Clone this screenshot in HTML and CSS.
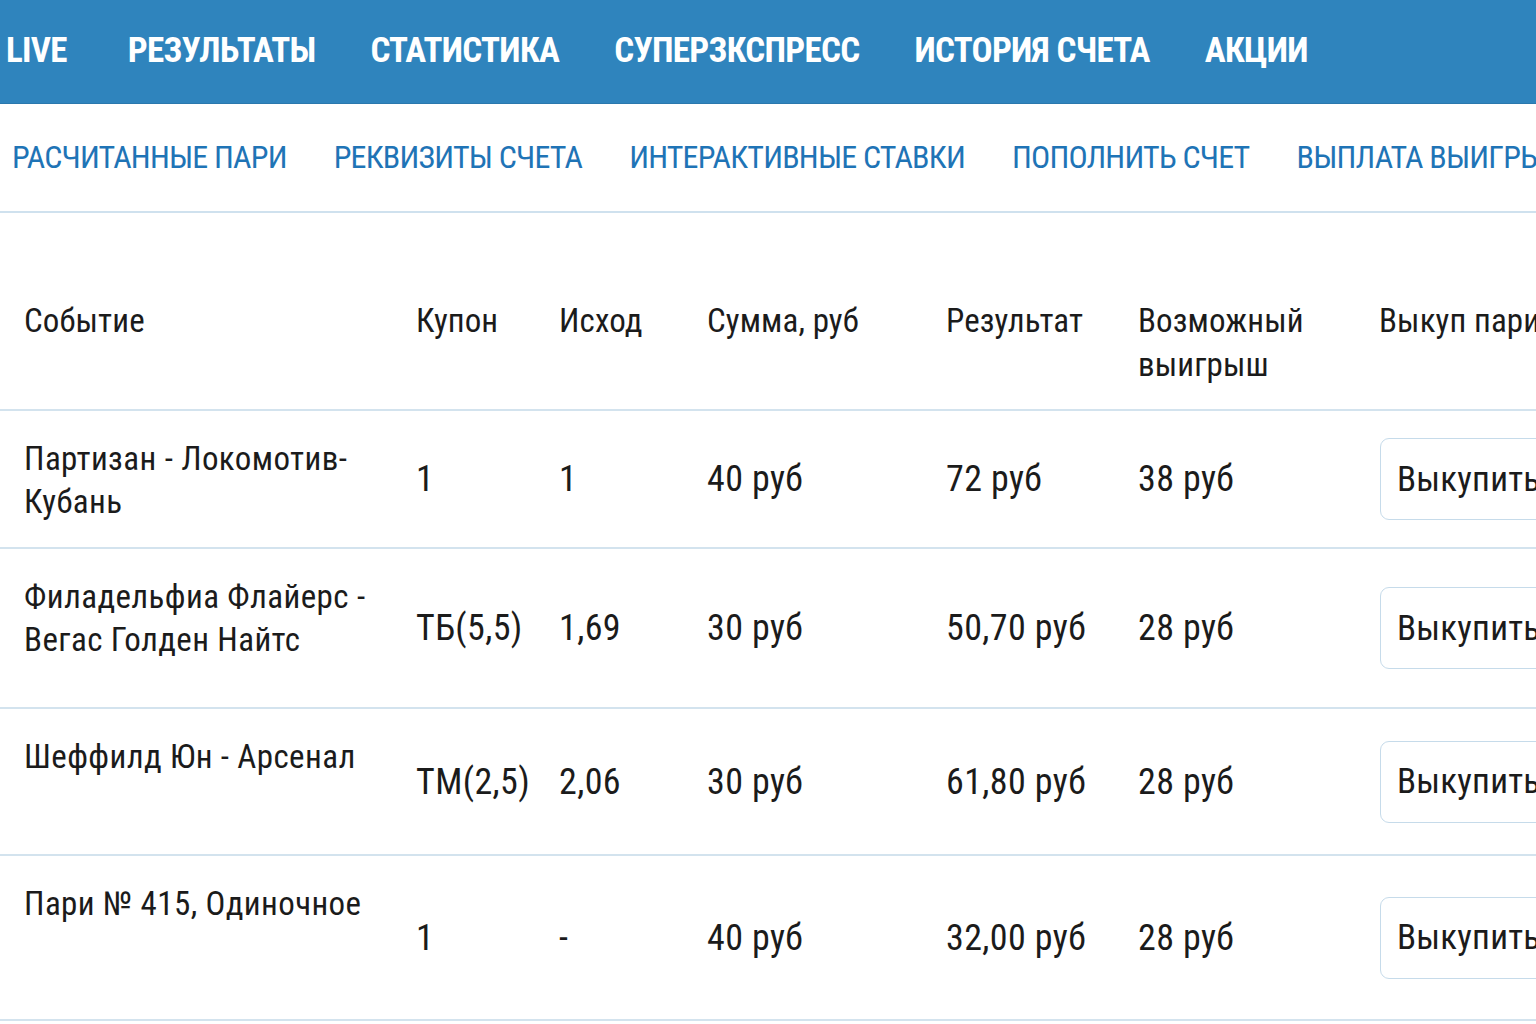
FILE: index.html
```html
<!DOCTYPE html>
<html lang="ru">
<head>
<meta charset="utf-8">
<title>Выкуп пари</title>
<link rel="stylesheet" href="styles.css">
</head>
<body>
<header class="topbar">
  <nav class="topnav">
    <a class="topnav-item live">LIVE</a>
    <a class="topnav-item">РЕЗУЛЬТАТЫ</a>
    <a class="topnav-item">СТАТИСТИКА</a>
    <a class="topnav-item">СУПЕРЗКСПРЕСС</a>
    <a class="topnav-item">ИСТОРИЯ СЧЕТА</a>
    <a class="topnav-item">АКЦИИ</a>
  </nav>
</header>
<nav class="subnav">
  <a class="subnav-item">РАСЧИТАННЫЕ ПАРИ</a>
  <a class="subnav-item">РЕКВИЗИТЫ СЧЕТА</a>
  <a class="subnav-item">ИНТЕРАКТИВНЫЕ СТАВКИ</a>
  <a class="subnav-item">ПОПОЛНИТЬ СЧЕТ</a>
  <a class="subnav-item">ВЫПЛАТА ВЫИГРЫША</a>
</nav>
<main class="content">
  <table class="bets">
    <colgroup>
      <col class="c-event"><col class="c-coupon"><col class="c-outcome"><col class="c-sum"><col class="c-result"><col class="c-win"><col class="c-buy">
    </colgroup>
    <thead>
      <tr>
        <th class="first">Событие</th>
        <th>Купон</th>
        <th>Исход</th>
        <th>Сумма, руб</th>
        <th>Результат</th>
        <th>Возможный<br>выигрыш</th>
        <th>Выкуп пари</th>
      </tr>
    </thead>
    <tbody>
      <tr class="r1">
        <td class="event">Партизан - Локомотив-<br>Кубань</td>
        <td>1</td>
        <td>1</td>
        <td>40 руб</td>
        <td>72 руб</td>
        <td>38 руб</td>
        <td><button class="buy">Выкупить</button></td>
      </tr>
      <tr class="r2">
        <td class="event">Филадельфиа Флайерс -<br>Вегас Голден Найтс</td>
        <td>ТБ(5,5)</td>
        <td>1,69</td>
        <td>30 руб</td>
        <td>50,70 руб</td>
        <td>28 руб</td>
        <td><button class="buy">Выкупить</button></td>
      </tr>
      <tr class="r3">
        <td class="event">Шеффилд Юн - Арсенал</td>
        <td>ТМ(2,5)</td>
        <td>2,06</td>
        <td>30 руб</td>
        <td>61,80 руб</td>
        <td>28 руб</td>
        <td><button class="buy">Выкупить</button></td>
      </tr>
      <tr class="r4">
        <td class="event">Пари № 415, Одиночное</td>
        <td>1</td>
        <td>-</td>
        <td>40 руб</td>
        <td>32,00 руб</td>
        <td>28 руб</td>
        <td><button class="buy">Выкупить</button></td>
      </tr>
    </tbody>
  </table>
</main>
</body>
</html>
```
FILE: styles.css
```css
* { box-sizing: border-box; }
html, body {
  margin: 0;
  padding: 0;
  background: #ffffff;
  width: 1536px;
  height: 1024px;
  overflow: hidden;
}
body {
  font-family: Roboto, "Liberation Sans", sans-serif;
  font-stretch: 75%;
  color: #1b1b1b;
}
.topbar {
  height: 104px;
  background: #2f84bd;
  display: flex;
  align-items: center;
  padding-left: 6px;
  padding-bottom: 2px;
  border-bottom: 1px solid #2a78ad;
}
.topnav {
  display: flex;
  gap: 55px;
  white-space: nowrap;
}
.topnav-item {
  color: #ffffff;
  font-weight: 700;
  font-size: 35px;
  letter-spacing: -0.7px;
}
.topnav-item.live { margin-right: 6px; }
.subnav {
  height: 109px;
  display: flex;
  align-items: center;
  gap: 47px;
  padding-left: 12px;
  padding-bottom: 2px;
  border-bottom: 2px solid #cfe1ee;
  white-space: nowrap;
}
.subnav-item {
  color: #1f74b6;
  font-size: 32px;
  letter-spacing: -0.8px;
}
.content {
  width: 1536px;
  overflow: hidden;
}
.bets {
  border-collapse: collapse;
  table-layout: fixed;
  width: 1700px;
}
.c-event { width: 416px; }
.c-coupon { width: 143px; }
.c-outcome { width: 148px; }
.c-sum { width: 239px; }
.c-result { width: 192px; }
.c-win { width: 241px; }
.c-buy { width: 321px; }
.bets th {
  height: 197px;
  text-align: left;
  vertical-align: top;
  font-weight: 400;
  font-size: 33px;
  letter-spacing: 0.1px;
  line-height: 44px;
  padding: 86px 0 0 0;
  border-bottom: 2px solid #d3e3ee;
  white-space: nowrap;
}
.bets th.first { padding-left: 24px; }
.bets td {
  vertical-align: middle;
  padding: 0;
  font-size: 36px;
  letter-spacing: 0.4px;
  line-height: 44px;
  border-bottom: 2px solid #d3e3ee;
  white-space: nowrap;
}
.bets td.event {
  vertical-align: top;
  padding: 26px 0 0 24px;
  font-size: 33px;
  letter-spacing: 0.4px;
  line-height: 43px;
}
.r1 td { height: 138px; }
.r2 td { height: 160px; }
.r3 td { height: 147px; }
.r4 td { height: 165px; }
.buy {
  font-family: inherit;
  font-stretch: inherit;
  font-size: 35px;
  letter-spacing: 0.2px;
  color: #1b1b1b;
  background: #ffffff;
  height: 82px;
  width: 220px;
  text-align: left;
  padding: 0 0 0 16px;
  border: 1.5px solid #c6dbea;
  border-radius: 9px;
  margin-left: 1px;
}
```
